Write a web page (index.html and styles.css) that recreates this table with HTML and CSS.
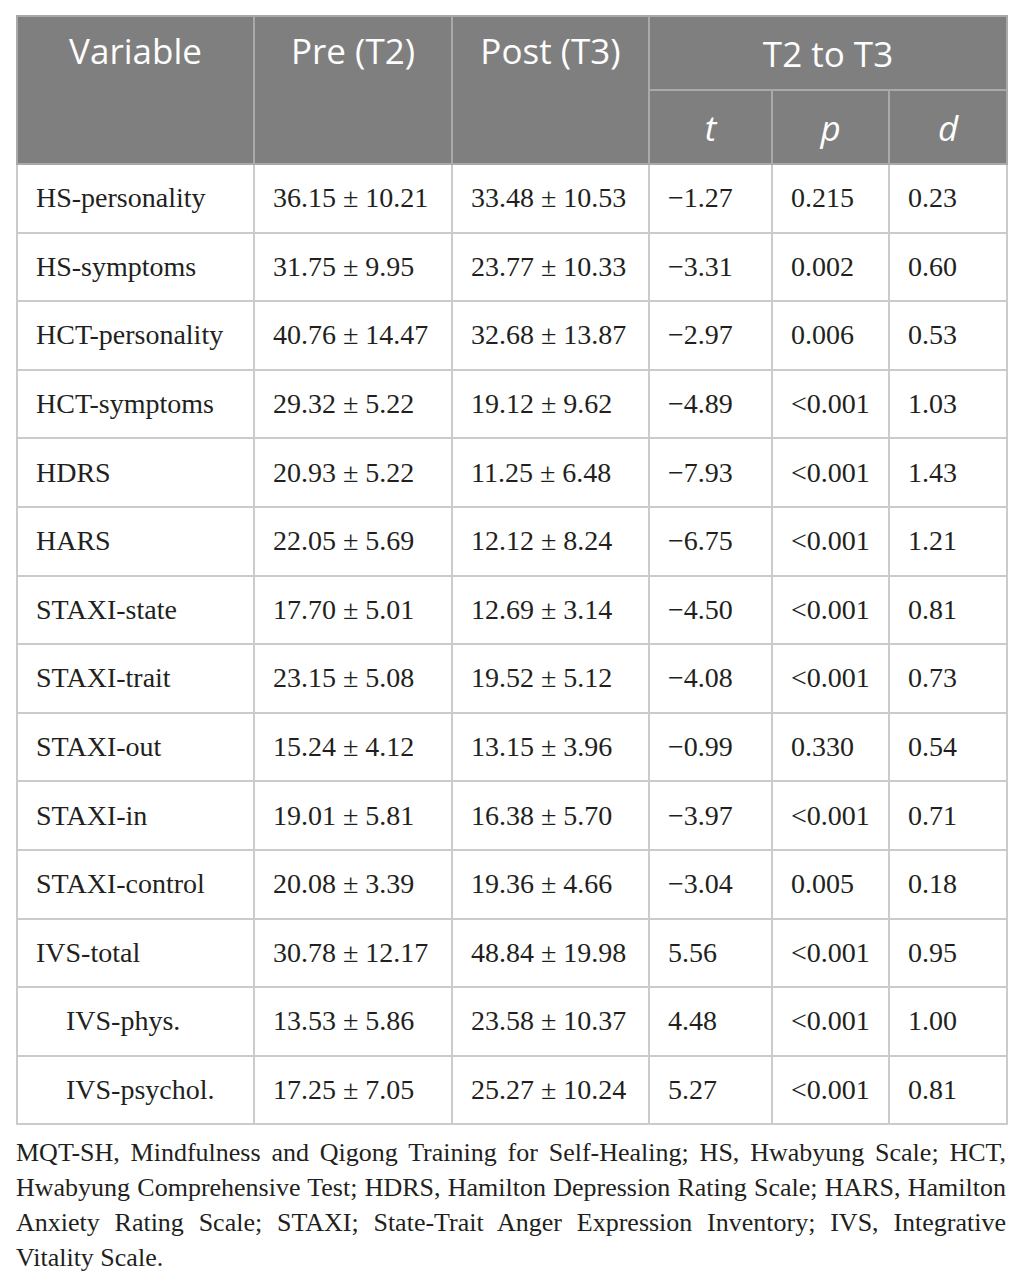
FILE: index.html
```html
<!DOCTYPE html>
<html lang="en">
<head>
    <meta charset="UTF-8">
    <title>Table</title>
    <link rel="stylesheet" href="styles.css">
</head>
<body>

    <div class="table-wrap">
        <table class="results">
            <colgroup>
                <col class="c-var">
                <col class="c-pre">
                <col class="c-post">
                <col class="c-t">
                <col class="c-p">
                <col class="c-d">
            </colgroup>
            <thead>
                <tr class="head-top">
                    <th rowspan="2" class="th-tall">Variable</th>
                    <th rowspan="2" class="th-tall">Pre (T2)</th>
                    <th rowspan="2" class="th-tall">Post (T3)</th>
                    <th colspan="3">T2 to T3</th>
                </tr>
                <tr class="head-sub">
                    <th><em>t</em></th>
                    <th><em>p</em></th>
                    <th><em>d</em></th>
                </tr>
            </thead>
            <tbody>
                <tr><td>HS-personality</td><td>36.15 ± 10.21</td><td>33.48 ± 10.53</td><td>−1.27</td><td>0.215</td><td>0.23</td></tr>
                <tr><td>HS-symptoms</td><td>31.75 ± 9.95</td><td>23.77 ± 10.33</td><td>−3.31</td><td>0.002</td><td>0.60</td></tr>
                <tr><td>HCT-personality</td><td>40.76 ± 14.47</td><td>32.68 ± 13.87</td><td>−2.97</td><td>0.006</td><td>0.53</td></tr>
                <tr><td>HCT-symptoms</td><td>29.32 ± 5.22</td><td>19.12 ± 9.62</td><td>−4.89</td><td>&lt;0.001</td><td>1.03</td></tr>
                <tr><td>HDRS</td><td>20.93 ± 5.22</td><td>11.25 ± 6.48</td><td>−7.93</td><td>&lt;0.001</td><td>1.43</td></tr>
                <tr><td>HARS</td><td>22.05 ± 5.69</td><td>12.12 ± 8.24</td><td>−6.75</td><td>&lt;0.001</td><td>1.21</td></tr>
                <tr><td>STAXI-state</td><td>17.70 ± 5.01</td><td>12.69 ± 3.14</td><td>−4.50</td><td>&lt;0.001</td><td>0.81</td></tr>
                <tr><td>STAXI-trait</td><td>23.15 ± 5.08</td><td>19.52 ± 5.12</td><td>−4.08</td><td>&lt;0.001</td><td>0.73</td></tr>
                <tr><td>STAXI-out</td><td>15.24 ± 4.12</td><td>13.15 ± 3.96</td><td>−0.99</td><td>0.330</td><td>0.54</td></tr>
                <tr><td>STAXI-in</td><td>19.01 ± 5.81</td><td>16.38 ± 5.70</td><td>−3.97</td><td>&lt;0.001</td><td>0.71</td></tr>
                <tr><td>STAXI-control</td><td>20.08 ± 3.39</td><td>19.36 ± 4.66</td><td>−3.04</td><td>0.005</td><td>0.18</td></tr>
                <tr><td>IVS-total</td><td>30.78 ± 12.17</td><td>48.84 ± 19.98</td><td>5.56</td><td>&lt;0.001</td><td>0.95</td></tr>
                <tr><td class="sub-var">IVS-phys.</td><td>13.53 ± 5.86</td><td>23.58 ± 10.37</td><td>4.48</td><td>&lt;0.001</td><td>1.00</td></tr>
                <tr><td class="sub-var">IVS-psychol.</td><td>17.25 ± 7.05</td><td>25.27 ± 10.24</td><td>5.27</td><td>&lt;0.001</td><td>0.81</td></tr>
            </tbody>
        </table>

        <p class="note">MQT-SH, Mindfulness and Qigong Training for Self-Healing; HS, Hwabyung Scale; HCT, Hwabyung Comprehensive Test; HDRS, Hamilton Depression Rating Scale; HARS, Hamilton Anxiety Rating Scale; STAXI; State-Trait Anger Expression Inventory; IVS, Integrative Vitality Scale.</p>
    </div>

</body>
</html>
```

FILE: styles.css
```css
body {
    margin: 0;
    background: #fff;
    color: #231f20;
    font-family: "Liberation Serif", "Times New Roman", serif;
}

.table-wrap {
    width: 990px;
    padding: 15px 0 0 16px;
}

.results {
    width: 990px;
    border-collapse: collapse;
    table-layout: fixed;
}

.c-var { width: 237px; }
.c-pre { width: 198px; }
.c-post { width: 197px; }
.c-t { width: 123px; }
.c-p { width: 117px; }
.c-d { width: 118px; }

.results th {
    background-color: #7f7f7f;
    color: #fdfdfd;
    font-family: "Open Sans", sans-serif;
    font-weight: 400;
    font-size: 35px;
    text-align: center;
    border: 2px solid #a9a9a9;
    padding: 0 6px;
    vertical-align: middle;
}

.results th em {
    font-style: italic;
}

.head-top {
    height: 74px;
}

.head-sub {
    height: 74px;
}

.results th.th-tall {
    vertical-align: top;
    padding-top: 10px;
}

.results td {
    font-size: 28px;
    height: 66.6px;
    padding: 0 6px 0 18px;
    border: 2px solid #cbcbcb;
    vertical-align: middle;
    white-space: nowrap;
}

.results td.sub-var {
    padding-left: 48px;
}

.note {
    margin: 10px 0 0;
    font-size: 26px;
    line-height: 35px;
    text-align: justify;
}
```
